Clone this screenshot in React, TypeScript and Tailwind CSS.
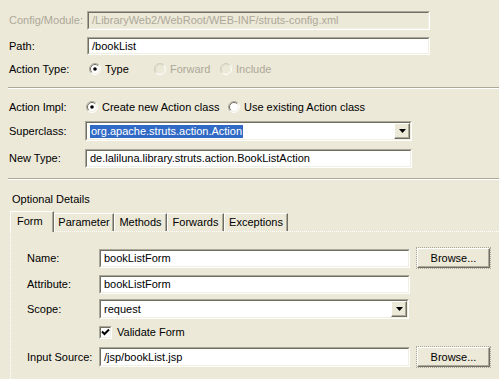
import React from "react";

const font = "font-['Liberation_Sans',Arial,sans-serif]";

function Sunken({ className = "", inner = "", children }: { className?: string; inner?: string; children?: React.ReactNode }) {
  return (
    <div className={`border border-t-[#ACA899] border-l-[#ACA899] border-b-white border-r-white ${className}`}>
      <div className={`h-full border border-t-[#716F64] border-l-[#716F64] border-b-[#F1EFE2] border-r-[#F1EFE2] ${inner}`}>
        {children}
      </div>
    </div>
  );
}

function Field({ value, disabled, className = "" }: { value: string; disabled?: boolean; className?: string }) {
  return (
    <Sunken
      className={className}
      inner={`flex items-center pl-[3px] whitespace-nowrap overflow-hidden ${disabled ? "bg-[#ECE9D8] text-[#ACA899]" : "bg-white"}`}
    >
      {value}
    </Sunken>
  );
}

function Raised({ className = "", children }: { className?: string; children?: React.ReactNode }) {
  return (
    <div
      className={`border border-t-white border-l-white border-b-[#716F64] border-r-[#716F64] bg-[#ECE9D8] shadow-[inset_-1px_-1px_#ACA899] flex items-center justify-center ${className}`}
    >
      {children}
    </div>
  );
}

function Combo({ children, className = "" }: { children?: React.ReactNode; className?: string }) {
  return (
    <Sunken className={className} inner="flex items-stretch bg-white">
      <div className="flex-1 flex items-center pl-[3px] whitespace-nowrap overflow-hidden">{children}</div>
      <Raised className="w-[16px]">
        <svg width="7" height="4" viewBox="0 0 7 4">
          <path d="M0 0h7L3.5 4z" fill="#000" />
        </svg>
      </Raised>
    </Sunken>
  );
}

function Radio({ checked, disabled }: { checked?: boolean; disabled?: boolean }) {
  return (
    <svg width="12" height="12" viewBox="0 0 12 12" className="shrink-0">
      <circle cx="6" cy="6" r="5" fill={disabled ? "#ECE9D8" : "#fff"} />
      <path d="M2.11 9.89A5.5 5.5 0 0 1 9.89 2.11" fill="none" stroke={disabled ? "#CFCCBD" : "#ACA899"} />
      <path d="M9.89 2.11A5.5 5.5 0 0 1 2.11 9.89" fill="none" stroke="#fff" />
      <path d="M2.8 9.2A4.5 4.5 0 0 1 9.2 2.8" fill="none" stroke={disabled ? "#DDDACB" : "#716F64"} />
      <path d="M9.2 2.8A4.5 4.5 0 0 1 2.8 9.2" fill="none" stroke={disabled ? "#F1EFE2" : "#F1EFE2"} />
      {checked && <circle cx="6" cy="6" r="1.8" fill="#000" />}
    </svg>
  );
}

function Separator() {
  return <div className="ml-[8px] border-t border-t-[#ACA899] border-b border-b-white" />;
}

function Tab({ label, selected, className = "" }: { label: string; selected?: boolean; className?: string }) {
  return (
    <div
      className={`flex items-center border-t border-l border-dotted border-t-white border-l-white border-r border-r-[#716F64] border-solid shadow-[inset_-1px_0_#ACA899] ${
        selected ? "h-[21px] -mb-px relative z-10 bg-[#ECE9D8] pl-[6px] pb-[2px]" : "h-[18px] justify-center"
      } ${className}`}
    >
      {label}
    </div>
  );
}

function Browse() {
  return (
    <div className="border border-dotted border-[#ACA899] ml-[6px]">
      <Raised className="w-[73px] h-[20px]">Browse...</Raised>
    </div>
  );
}

export default function App() {
  return (
    <div className={`w-[499px] h-[379px] overflow-hidden bg-[#ECE9D8] text-black text-[11px] leading-[13px] ${font}`}>
      <div className="pt-[11px]">
        <div className="flex items-center pl-[9px] h-[19px]">
          <div className="w-[78px] text-[#ACA899]">Config/Module:</div>
          <Field value="/LibraryWeb2/WebRoot/WEB-INF/struts-config.xml" disabled className="w-[343px] h-[19px]" />
        </div>
        <div className="flex items-center pl-[9px] h-[18px] mt-[7px]">
          <div className="w-[78px]">Path:</div>
          <Field value="/bookList" className="w-[343px] h-[18px]" />
        </div>
        <div className="flex items-center pl-[9px] h-[14px] mt-[7px]">
          <div className="w-[80px]">Action Type:</div>
          <div className="w-[65px] flex items-center gap-[4px]">
            <Radio checked />
            <span>Type</span>
          </div>
          <div className="w-[66px] flex items-center gap-[4px] text-[#ACA899]">
            <Radio disabled />
            <span>Forward</span>
          </div>
          <div className="flex items-center gap-[4px] text-[#ACA899]">
            <Radio disabled />
            <span>Include</span>
          </div>
        </div>
        <div className="mt-[11px]">
          <Separator />
        </div>
        <div className="flex items-center pl-[9px] h-[14px] mt-[11px]">
          <div className="w-[77px]">Action Impl:</div>
          <div className="w-[142px] flex items-center gap-[4px]">
            <Radio checked />
            <span>Create new Action class</span>
          </div>
          <div className="flex items-center gap-[4px]">
            <Radio />
            <span>Use existing Action class</span>
          </div>
        </div>
        <div className="flex items-center pl-[9px] h-[20px] mt-[7px]">
          <div className="w-[76px]">Superclass:</div>
          <Combo className="w-[327px] h-[20px]">
            <span className="bg-[#316AC5] text-white px-px">org.apache.struts.action.Action</span>
          </Combo>
        </div>
        <div className="flex items-center pl-[9px] h-[19px] mt-[8px]">
          <div className="w-[76px]">New Type:</div>
          <Field value="de.laliluna.library.struts.action.BookListAction" className="w-[327px] h-[19px]" />
        </div>
        <div className="mt-[10px]">
          <Separator />
        </div>
        <div className="pl-[12px] h-[14px] mt-[12px] flex items-center">Optional Details</div>
        <div className="pl-[10px] mt-[5px]">
          <div className="flex items-end">
            <Tab label="Form" selected className="w-[44px]" />
            <Tab label="Parameter" className="w-[60px]" />
            <Tab label="Methods" className="w-[53px]" />
            <Tab label="Forwards" className="w-[57px]" />
            <Tab label="Exceptions" className="w-[64px]" />
          </div>
          <div className="border-t border-l border-dotted border-white h-[200px] pl-[16px] pt-[15px]">
            <div className="flex items-center h-[22px]">
              <div className="w-[72px]">Name:</div>
              <Field value="bookListForm" className="w-[311px] h-[19px]" />
              <Browse />
            </div>
            <div className="flex items-center h-[19px] mt-[6px]">
              <div className="w-[72px]">Attribute:</div>
              <Field value="bookListForm" className="w-[311px] h-[19px]" />
            </div>
            <div className="flex items-center h-[20px] mt-[5px]">
              <div className="w-[72px]">Scope:</div>
              <Combo className="w-[310px] h-[20px]">request</Combo>
            </div>
            <div className="flex items-center h-[13px] mt-[7px] pl-[72px] gap-[5px]">
              <Sunken className="w-[13px] h-[13px]" inner="bg-white flex items-center justify-center">
                <svg width="9" height="9" viewBox="0 0 9 9">
                  <path d="M1 3.5l2.5 2.5L8 1.5" fill="none" stroke="#000" strokeWidth="2" />
                </svg>
              </Sunken>
              <span>Validate Form</span>
            </div>
            <div className="flex items-center h-[22px] mt-[7px]">
              <div className="w-[72px]">Input Source:</div>
              <Field value="/jsp/bookList.jsp" className="w-[311px] h-[20px]" />
              <Browse />
            </div>
          </div>
        </div>
      </div>
    </div>
  );
}
